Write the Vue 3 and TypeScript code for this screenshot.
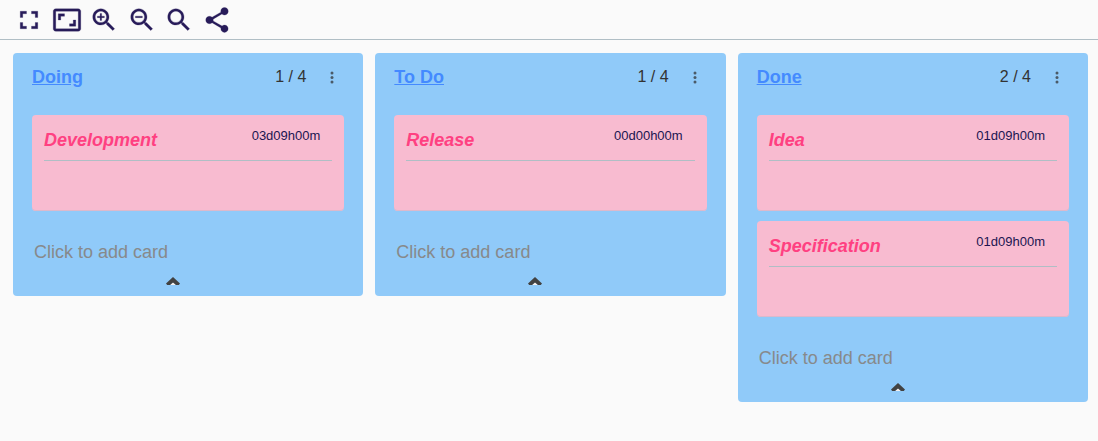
<script setup lang="ts">
interface Card {
  title: string
  time: string
}

interface Column {
  title: string
  limit: number
  cards: Card[]
}

interface Tool {
  label: string
  path: string
}

const handle =
  'M15.5 14h-.79l-.28-.27C15.41 12.59 16 11.11 16 9.5 16 5.91 13.09 3 9.5 3S3 5.91 3 9.5 5.91 16 9.5 16c1.61 0 3.09-.59 4.23-1.57l.27.28v.79l5 4.99L20.49 19l-4.99-5zm-6 0C7.01 14 5 11.99 5 9.5S7.01 5 9.5 5 14 7.01 14 9.5 11.99 14 9.5 14z'

const tools: Tool[] = [
  {
    label: 'Full screen',
    path: 'M7 14H5v5h5v-2H7v-3zm-2-4h2V7h3V5H5v5zm12 7h-3v2h5v-5h-2v3zM14 5v2h3v3h2V5h-5z',
  },
  {
    label: 'Fit board',
    path: 'M19 12h-2v3h-3v2h5v-5zM7 9h3V7H5v5h2V9zm14-6H3c-1.1 0-2 .9-2 2v14c0 1.1.9 2 2 2h18c1.1 0 2-.9 2-2V5c0-1.1-.9-2-2-2zm0 16.01H3V4.99h18v14.02z',
  },
  { label: 'Zoom in', path: handle + 'M12.3 10.1h-2.2v2.2H8.9v-2.2H6.7V8.9h2.2V6.7h1.2v2.2h2.2z' },
  { label: 'Zoom out', path: handle + 'M6.7 8.9h5.6v1.2H6.7z' },
  { label: 'Reset zoom', path: handle },
  {
    label: 'Share',
    path: 'M18 16.08c-.76 0-1.44.3-1.96.77L8.91 12.7c.05-.23.09-.46.09-.7s-.04-.47-.09-.7l7.05-4.11c.54.5 1.25.81 2.04.81 1.66 0 3-1.34 3-3s-1.34-3-3-3-3 1.34-3 3c0 .24.04.47.09.7L8.04 9.81C7.5 9.31 6.79 9 6 9c-1.66 0-3 1.34-3 3s1.34 3 3 3c.79 0 1.5-.31 2.04-.81l7.12 4.16c-.05.21-.08.43-.08.65 0 1.61 1.31 2.92 2.92 2.92s2.92-1.31 2.92-2.92-1.31-2.92-2.92-2.92z',
  },
]

const columns: Column[] = [
  { title: 'Doing', limit: 4, cards: [{ title: 'Development', time: '03d09h00m' }] },
  { title: 'To Do', limit: 4, cards: [{ title: 'Release', time: '00d00h00m' }] },
  {
    title: 'Done',
    limit: 4,
    cards: [
      { title: 'Idea', time: '01d09h00m' },
      { title: 'Specification', time: '01d09h00m' },
    ],
  },
]
</script>

<template>
  <div class="page">
    <header class="toolbar">
      <div class="tools">
        <button v-for="tool in tools" :key="tool.label" type="button" class="tool" :aria-label="tool.label">
          <svg viewBox="0 0 24 24" width="30" height="30" aria-hidden="true"><path :d="tool.path" /></svg>
        </button>
      </div>
    </header>

    <main class="board">
      <section v-for="column in columns" :key="column.title" class="column">
        <div class="head">
          <a href="#" class="name">{{ column.title }}</a>
          <span class="count">{{ column.cards.length }} / {{ column.limit }}</span>
          <button type="button" class="menu" :aria-label="`${column.title} menu`">
            <svg viewBox="0 0 4 14" width="4" height="14" aria-hidden="true">
              <circle cx="2" cy="3" r="1.5" />
              <circle cx="2" cy="7.5" r="1.5" />
              <circle cx="2" cy="12" r="1.5" />
            </svg>
          </button>
        </div>

        <div class="cards">
          <article v-for="card in column.cards" :key="card.title" class="card">
            <div class="card-head">
              <h3 class="card-title">{{ card.title }}</h3>
              <time class="time">{{ card.time }}</time>
            </div>
          </article>
        </div>

        <input class="add" type="text" placeholder="Click to add card" :aria-label="`Add card to ${column.title}`" />

        <div class="foot">
          <button type="button" class="collapse" :aria-label="`Collapse ${column.title}`">
            <svg viewBox="0 0 14 8" width="14" height="8" aria-hidden="true">
              <path d="M4 8 L7 5 L10 8Z" fill="#f5f0ee" />
              <path d="M7 0 L14 6.6 L12.8 8 H10 L7 5.4 L4 8 H1.2 L0 6.6Z" fill="#424242" />
            </svg>
          </button>
        </div>
      </section>
    </main>
  </div>
</template>

<style>
body {
  margin: 0;
  background: #fafafa;
}
</style>

<style scoped>
.page {
  font-family: "Liberation Sans", Arial, sans-serif;
}

button {
  display: flex;
  padding: 0;
  border: 0;
  background: none;
  cursor: pointer;
}

.toolbar {
  padding: 5px 14px 4px;
  border-bottom: 1px solid #b0bec5;
}

.tools {
  display: flex;
  justify-content: space-between;
  width: 218px;
}

.tool {
  fill: #271b59;
  stroke: #271b59;
  stroke-width: 0.2;
}

.board {
  display: grid;
  grid-template-columns: repeat(3, 1fr);
  align-items: start;
  gap: 12px;
  padding: 13px 10px 13px 13px;
}

.column {
  padding: 0 19px;
  border-radius: 4px;
  background: #90caf9;
}

.head {
  display: flex;
  align-items: center;
  height: 48px;
  margin-bottom: 14px;
}

.name {
  flex: 1;
  color: #448aff;
  font-size: 18px;
  font-weight: bold;
}

.count {
  color: #333;
  font-size: 16px;
}

.menu {
  justify-content: center;
  width: 24px;
  margin-left: 14px;
  fill: #4a5a68;
}

.cards {
  display: grid;
  gap: 10px;
}

.card {
  height: 96px;
  padding: 0 12px;
  box-sizing: border-box;
  border-radius: 4px;
  background: #f8bbd0;
  box-shadow: inset 0 -1px 0 #dcb9cc;
}

.card-head {
  display: flex;
  justify-content: space-between;
  padding: 12px 12px 6px 0;
  border-bottom: 1px solid #b0bec5;
}

.card-title {
  margin: 0;
  color: #ff4081;
  font-size: 18px;
  font-style: italic;
  line-height: 27px;
}

.time {
  color: #211551;
  font-size: 13px;
  line-height: 17px;
}

.add {
  display: block;
  width: 100%;
  height: 24px;
  margin-top: 29px;
  padding: 0 2px;
  box-sizing: border-box;
  border: 0;
  background: none;
  color: #333;
  font: 18px "Liberation Sans", Arial, sans-serif;
}

.add::placeholder {
  color: #87898b;
  opacity: 1;
}

.foot {
  display: flex;
  justify-content: center;
  padding: 13px 30px 11px 0;
}
</style>
